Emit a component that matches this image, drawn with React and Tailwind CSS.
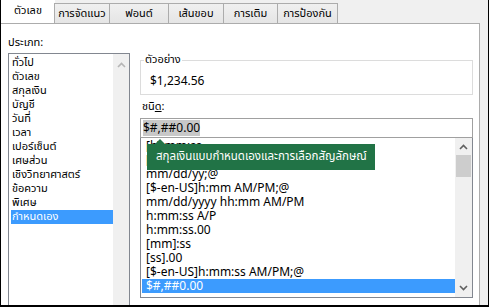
import React from "react";

const tabs = ["การจัดแนว", "ฟอนต์", "เส้นขอบ", "การเติม", "การป้องกัน"];
const tabWidths = ["w-[56px]", "w-[60px]", "w-[56px]", "w-[55px]", "w-[61px]"];

const categories = [
  "ทั่วไป",
  "ตัวเลข",
  "สกุลเงิน",
  "บัญชี",
  "วันที่",
  "เวลา",
  "เปอร์เซ็นต์",
  "เศษส่วน",
  "เชิงวิทยาศาสตร์",
  "ข้อความ",
  "พิเศษ",
  "กำหนดเอง",
];

const formats = [
  "[h]:mm:ss",
  "[$-en-US]mmmm d, yyyy;@",
  "mm/dd/yy;@",
  "[$-en-US]h:mm AM/PM;@",
  "mm/dd/yyyy hh:mm AM/PM",
  "h:mm:ss A/P",
  "h:mm:ss.00",
  "[mm]:ss",
  "[ss].00",
  "[$-en-US]h:mm:ss AM/PM;@",
  "$#,##0.00",
];

const thai = "font-['Tahoma','Leelawadee_UI','Noto_Sans_Thai','Noto_Sans',sans-serif]";
const latin = "font-['Segoe_UI','Noto_Sans','Open_Sans',sans-serif]";

const Arrow = ({ down }) => (
  <svg width="9" height="6" viewBox="0 0 9 6">
    <polyline
      points={down ? "1,1 4.5,4.5 8,1" : "1,5 4.5,1.5 8,5"}
      fill="none"
      stroke="#606060"
      strokeWidth="1.6"
    />
  </svg>
);

export default function App() {
  return (
    <div className="w-[489px] h-[307px] flex flex-col bg-[#f0f0f0] border-l border-r border-b-2 border-black overflow-hidden">
      {/* tabs */}
      <div className={`flex items-end h-[23px] text-[11px] leading-[14px] text-black ${thai}`}>
        <div className="w-[54px] h-[23px] bg-white flex items-center justify-center pb-[2px]">
          ตัวเลข
        </div>
        {tabs.map((t, i) => (
          <div
            key={t}
            className={`${tabWidths[i]} h-[20px] -ml-px first:ml-0 border border-b-0 border-[#acacac] bg-gradient-to-b from-[#f0f0f0] to-[#e5e5e5] flex items-center justify-center whitespace-nowrap`}
          >
            {t}
          </div>
        ))}
      </div>

      {/* panel */}
      <div className="flex-1 mr-[8px] bg-white border-t border-r border-[#acacac] flex min-h-0">
        {/* category column */}
        <div className="pl-[7px] w-[129px] flex flex-col">
          <div className={`mt-[12px] h-[17px] text-[11px] leading-[14px] ${thai}`}>ประเภท:</div>
          <div className="flex-1 flex border border-b-0 border-[#828790] -mb-[10px]">
            <div className={`flex-1 pt-[2px] pl-[2px] text-[11px] ${thai}`}>
              {categories.map((c, i) => (
                <div
                  key={c}
                  className={`h-[14px] leading-[14px] pl-[1px] whitespace-nowrap ${
                    i === categories.length - 1 ? "bg-[#3c9bfe] text-white" : "text-black"
                  }`}
                >
                  {c}
                </div>
              ))}
            </div>
            <div className="w-[16px] bg-[#f0f0f0] flex justify-center pt-[8px]">
              <div className="opacity-40">
                <Arrow />
              </div>
            </div>
          </div>
        </div>

        {/* right column */}
        <div className="ml-[10px] w-[333px] flex flex-col">
          <div className="relative mt-[36px] h-[35px] border border-[#dcdcdc]">
            <span className={`absolute -top-[8px] left-[3px] bg-white px-[1px] text-[11px] leading-[14px] ${thai}`}>
              ตัวอย่าง
            </span>
            <div className={`pt-[12px] pl-[9px] text-[12px] leading-[16px] text-black ${latin}`}>$1,234.56</div>
          </div>
          <div className={`mt-[2px] h-[19px] pl-[2px] text-[11px] leading-[19px] ${thai}`}>
            ชนิ<span className="underline">ด</span>:
          </div>
          <div className="mt-[2px] h-[20px] border border-[#a0a0a0] flex items-center pl-[2px]">
            <span className={`bg-[#c8c8c8] text-[12px] leading-[16px] text-black ${latin}`}>
              $#,##0.00
            </span>
          </div>
          <div className="relative h-[160px] border border-t-0 border-[#828790] flex">
            <div className={`flex-1 pt-[1px] pl-[1px] text-[12px] text-black ${latin}`}>
              {formats.map((f, i) => (
                <div
                  key={f}
                  className={`h-[14px] leading-[14px] pl-[4px] whitespace-nowrap ${
                    i === formats.length - 1 ? "bg-[#3c9bfe] text-white" : ""
                  }`}
                >
                  {f}
                </div>
              ))}
            </div>
            <div className="w-[17px] bg-[#f0f0f0] flex flex-col items-center justify-between pt-[6px] pb-[6px]">
              <div className="flex flex-col items-center gap-[5px]">
                <Arrow />
                <div className="w-[15px] h-[22px] bg-[#cdcdcd]" />
              </div>
              <Arrow down />
            </div>

            {/* tooltip */}
            <div className="absolute left-[6px] top-[6px] w-[228px] h-[26px] bg-[#217346] flex items-center pl-[9px]">
              <div className="absolute -top-[5px] left-[7px] w-0 h-0 border-l-[6px] border-r-[6px] border-b-[6px] border-l-transparent border-r-transparent border-b-[#217346]" />
              <span className={`text-white text-[11.5px] leading-[14px] whitespace-nowrap ${thai}`}>
                สกุลเงินแบบกำหนดเองและการเลือกสัญลักษณ์
              </span>
            </div>
          </div>
        </div>
      </div>
    </div>
  );
}
